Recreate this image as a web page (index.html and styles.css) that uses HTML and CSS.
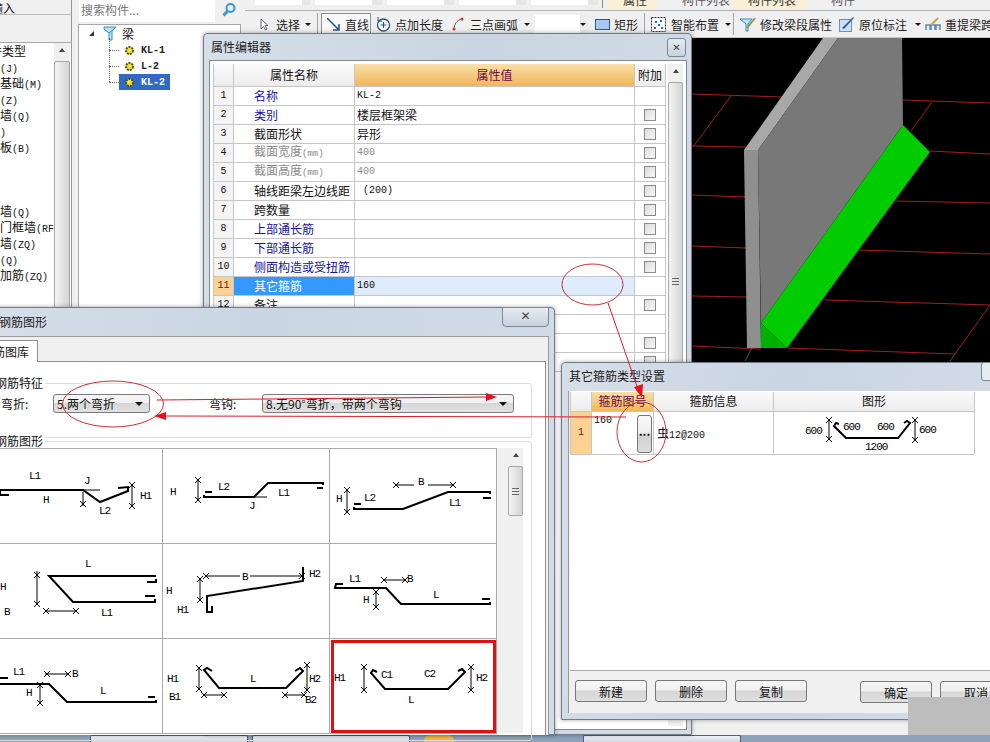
FILE: index.html
```html
<!DOCTYPE html>
<html lang="zh-CN">
<head>
    <meta charset="UTF-8">
    <meta name="viewport" content="width=device-width, initial-scale=1.0">
    <title>属性编辑器</title>
    <link rel="stylesheet" href="styles.css">
</head>
<body>
<div class="app">
    <div class="workspace">
        <!-- 左侧构件类型 -->
        <div class="side">
            <div class="side-top"><span class="side-top-text">输入</span></div>
            <div class="side-blank"></div>
            <div class="side-list">
                <ul class="type-list">
                    <li class="cut">件类型</li>
                    <li><span class="m">(J)</span></li>
                    <li>基础<span class="m">(M)</span></li>
                    <li><span class="m">(Z)</span></li>
                    <li>墙<span class="m">(Q)</span></li>
                    <li><span class="m">)</span></li>
                    <li>板<span class="m">(B)</span></li>
                    <li>&nbsp;</li>
                    <li>&nbsp;</li>
                    <li>&nbsp;</li>
                    <li>墙<span class="m">(Q)</span></li>
                    <li>门框墙<span class="m">(RF</span></li>
                    <li>墙<span class="m">(ZQ)</span></li>
                    <li><span class="m">(Q)</span></li>
                    <li>加筋<span class="m">(ZQ)</span></li>
                </ul>
                <div class="vscroll side-scroll"><span class="up"></span><span class="thumb"></span></div>
            </div>
        </div>

        <!-- 构件树 -->
        <div class="tree-panel">
            <div class="search">
                <div class="search-box">搜索构件...</div>
                <svg class="search-icon" width="16" height="16" viewBox="0 0 16 16"><circle cx="9.5" cy="6" r="4" fill="#dff1fb" stroke="#3a97d4" stroke-width="2"/><path d="M6.5 9 2.5 13.5" stroke="#3a97d4" stroke-width="3"/></svg>
            </div>
            <div class="tree">
                <div class="tree-root">
                    <span class="tree-arrow"></span>
                    <svg width="14" height="15" viewBox="0 0 14 15"><path d="M1 1h12L9 5v9H6V7L1 3z" fill="#bfe3f5" stroke="#2f8fc4"/><path d="M6 7l6-5" stroke="#2f8fc4"/></svg>
                    <span class="tree-label">梁</span>
                </div>
                <div class="tree-kids">
                    <div class="tree-item"><svg class="gear" width="11" height="11" viewBox="0 0 11 11"><circle cx="5.5" cy="5.5" r="3.5" fill="#f2e33a" stroke="#54500c" stroke-width="2" stroke-dasharray="2 1"/></svg><span class="m tree-name">KL-1</span></div>
                    <div class="tree-item"><svg class="gear" width="11" height="11" viewBox="0 0 11 11"><circle cx="5.5" cy="5.5" r="3.5" fill="#f2e33a" stroke="#54500c" stroke-width="2" stroke-dasharray="2 1"/></svg><span class="m tree-name">L-2</span></div>
                    <div class="tree-item selected"><svg class="gear" width="11" height="11" viewBox="0 0 11 11"><circle cx="5.5" cy="5.5" r="3.5" fill="#f2e33a" stroke="#54500c" stroke-width="2" stroke-dasharray="2 1"/></svg><span class="m tree-name">KL-2</span></div>
                </div>
            </div>
        </div>

        <div class="main">
            <div class="strip">
                <span class="strip-box"></span><span class="strip-box wide"></span><span class="strip-box wide"></span><span class="strip-box wide"></span><span class="strip-box wide"></span>
                <span class="strip-sep"></span>
                <span class="strip-tab">属性</span>
                <span class="strip-text">构件列表</span>
                <span class="strip-tab second">构件列表</span>
                <span class="strip-text">构件</span>
            </div>
            <div class="toolbar">
                <div class="tool first">
                    <svg width="9" height="13" viewBox="0 0 9 13"><path d="M1 1v10l2.500-2.500 2 3.500 1.500-1-2-3.500H8z" fill="#fff" stroke="#667"/></svg>
                    <span class="tool-text gap-select">选择</span><span class="caret"></span>
                </div>
                <span class="tb-sep"></span>
                <div class="tool line-tool">
                    <svg width="13" height="13" viewBox="0 0 13 13"><path d="M0 0 12 12M12 6v6H6" fill="none" stroke="#24508c" stroke-width="1.500"/></svg>
                    <span>直线</span>
                </div>
                <div class="tool add-len">
                    <svg width="15" height="15" viewBox="0 0 15 15"><circle cx="7.500" cy="8" r="6" fill="#fff" stroke="#24508c" stroke-width="1.300"/><path d="M7.500 5v6M4.500 8h6" stroke="#24508c"/><path d="M2 0v4h4" fill="none" stroke="#24508c"/></svg>
                    <span>点加长度</span>
                </div>
                <div class="tool arc-tool">
                    <svg width="12" height="14" viewBox="0 0 12 14"><path d="M2 13C2 7 5 3 10 2" fill="none" stroke="#555"/><circle cx="2" cy="12" r="1.500" fill="#c33"/><circle cx="10" cy="2" r="1.500" fill="#c33"/></svg>
                    <span class="gap-arc">三点画弧</span><span class="caret gap-arc"></span>
                </div>
                <div class="combo"><span class="caret"></span></div>
                <div class="tool rect-tool">
                    <svg width="15" height="11" viewBox="0 0 15 11"><rect x=".5" y=".5" width="14" height="10" fill="#a9c8ee" stroke="#2b55a0"/></svg>
                    <span>矩形</span>
                </div>
                <span class="tb-sep rect-sep"></span>
                <div class="tool smart-tool">
                    <svg width="15" height="15" viewBox="0 0 15 15"><rect x=".5" y=".5" width="14" height="14" fill="#fff" stroke="#333" stroke-dasharray="2 1"/><path d="M4 4h2v2H4zM9 3h2v2H9zM7 7h2v2H7zM3 10h2v2H3zM10 10h2v2h-2z" fill="#2a6fb5"/></svg>
                    <span class="gap-smart">智能布置</span><span class="caret caret-smart"></span>
                </div>
                <span class="tb-sep smart-sep"></span>
                <div class="tool edit-tool">
                    <svg width="16" height="15" viewBox="0 0 16 15"><path d="M0 2h12L8 7v7H6V7z" fill="#bfe3f5" stroke="#2f8fc4"/><path d="M7 11 15 1" stroke="#a88d3b" stroke-width="2"/></svg>
                    <span>修改梁段属性</span>
                </div>
                <div class="tool mark-tool">
                    <svg width="16" height="16" viewBox="0 0 16 16"><rect x=".5" y="3.500" width="12" height="12" fill="#cfe0f3" stroke="#6d8fb8"/><path d="M3 12 14 1l1 1L5 13z" fill="#2a5fb0"/></svg>
                    <span class="gap-mark">原位标注</span><span class="caret gap-mark"></span>
                </div>
                <div class="tool span-tool">
                    <svg width="16" height="14" viewBox="0 0 16 14"><path d="M1 13V8h4v5M6 13V8h4v5M11 13V8h4v5" fill="none" stroke="#5c86b8" stroke-width="1.500"/><path d="M6 8l7-7" stroke="#c9a24a" stroke-width="2"/></svg>
                    <span>重提梁跨</span>
                </div>
            </div>
            <svg class="canvas" width="745" height="324" viewBox="245 38 745 324">
                <rect x="245" y="38" width="745" height="324" fill="#000"/>
                <g stroke="#a01f1f" stroke-width="1" fill="none">
                    <path d="M692 94 782 97M903 100 990 103M692 146 746 147M930 151 990 154M692 195 745 197M895 201 990 203M692 246 746 248M858 250 990 254M692 296 747 297M825 300 990 305M692 346 761 349M787 348 955 354"/>
                    <path d="M731 96 693 147M932 102 911 131M990 305 955 354"/>
                </g>
                <path d="M752 348 745 361M955 354 950 361" stroke="#2c6b22" fill="none"/>
                <polygon points="823,38 838,38 758,150 744,150" fill="#a8a8a8"/>
                <polygon points="838,38 902,38 903,125 761,323 758,150" fill="#787878"/>
                <polygon points="744,150 758,150 761,348 747,348" fill="#8f8f8f"/>
                <polygon points="903,125 930,152 787,348 761,323" fill="#00cc00"/>
                <polygon points="761,323 787,348 761,348" fill="#00b000"/>
            </svg>
        </div>
    </div>

    <div class="taskbar">
        <span class="task-item first-task"></span>
        <span class="task-item"></span>
        <span class="task-icon"></span>
        <span class="task-item last-task"></span>
    </div>

    <!-- 属性编辑器 -->
    <section class="window prop-window">
        <header class="win-title">属性编辑器<span class="win-close small">✕</span></header>
        <div class="prop-frame">
            <table class="prop-table">
                <colgroup><col class="c-no"><col class="c-name"><col class="c-val"><col class="c-add"></colgroup>
                <thead>
                    <tr><th></th><th>属性名称</th><th class="hot">属性值</th><th>附加</th></tr>
                </thead>
                <tbody>
                    <tr><td class="no">1</td><td class="name blue">名称</td><td class="val m">KL-2</td><td></td></tr>
                    <tr><td class="no">2</td><td class="name blue">类别</td><td class="val">楼层框架梁</td><td class="add"><span class="cb"></span></td></tr>
                    <tr><td class="no">3</td><td class="name">截面形状</td><td class="val">异形</td><td class="add"><span class="cb"></span></td></tr>
                    <tr class="gray"><td class="no">4</td><td class="name">截面宽度<span class="m small-m">(mm)</span></td><td class="val m">400</td><td class="add"><span class="cb"></span></td></tr>
                    <tr class="gray"><td class="no">5</td><td class="name">截面高度<span class="m small-m">(mm)</span></td><td class="val m">400</td><td class="add"><span class="cb"></span></td></tr>
                    <tr><td class="no">6</td><td class="name">轴线距梁左边线距</td><td class="val m">&nbsp;(200)</td><td class="add"><span class="cb"></span></td></tr>
                    <tr><td class="no">7</td><td class="name">跨数量</td><td class="val"></td><td class="add"><span class="cb"></span></td></tr>
                    <tr><td class="no">8</td><td class="name blue">上部通长筋</td><td class="val"></td><td class="add"><span class="cb"></span></td></tr>
                    <tr><td class="no">9</td><td class="name blue">下部通长筋</td><td class="val"></td><td class="add"><span class="cb"></span></td></tr>
                    <tr><td class="no">10</td><td class="name blue">侧面构造或受扭筋</td><td class="val"></td><td class="add"><span class="cb"></span></td></tr>
                    <tr class="current"><td class="no">11</td><td class="name">其它箍筋</td><td class="val m">160</td><td></td></tr>
                    <tr><td class="no">12</td><td class="name">备注</td><td class="val"></td><td class="add"><span class="cb"></span></td></tr>
                    <tr><td class="no">13</td><td class="name"></td><td class="val"></td><td></td></tr>
                    <tr><td class="no">14</td><td class="name"></td><td class="val"></td><td class="add"><span class="cb"></span></td></tr>
                    <tr><td class="no">15</td><td class="name"></td><td class="val"></td><td class="add"><span class="cb"></span></td></tr>
                </tbody>
            </table>
            <div class="vscroll prop-scroll"><span class="up"></span><span class="thumb"><i></i></span></div>
        </div>
    </section>

    <!-- 钢筋图形 -->
    <section class="window rebar-window">
        <header class="win-title rebar-title">钢筋图形<span class="win-close wide-close">✕</span></header>
        <div class="rebar-body">
            <div class="tab">箍筋图库</div>
            <div class="tab-pane">
                <div class="group first-group">
                    <div class="group-title">钢筋特征</div>
                    <div class="filters">
                        <span class="f-label">弯折:</span>
                        <div class="select s-bend">5.两个弯折<span class="caret"></span></div>
                        <span class="f-label hook">弯钩:</span>
                        <div class="select s-hook">8.无90°弯折，带两个弯钩<span class="caret"></span></div>
                    </div>
                </div>
                <div class="group">
                    <div class="group-title">钢筋图形</div>
                    <div class="gallery">
                        <div class="shapes">
                            <div class="shape">
                                <svg width="167" height="94" viewBox="-4 448 167 94">
                                    <defs><path id="tick" d="M-3 -3 3 3M3 -3 -3 3" fill="none" stroke="#000" stroke-width="1"/></defs>
                                    <path class="bar" d="M9 494H0V489H83L100 501 128 490V486L118 487"/>
                                    <path class="dim" d="M83 491V505M132 484V505M83 489H100"/>
                                    <use href="#tick" x="83" y="503"/><use href="#tick" x="132" y="484"/><use href="#tick" x="132" y="505"/>
                                    <text x="29" y="478">L1</text><text x="84" y="483">J</text><text x="43" y="502">H</text><text x="99" y="513">L2</text><text x="140" y="498">H1</text>
                                </svg>
                            </div>
                            <div class="shape">
                                <svg width="167" height="94" viewBox="163 448 167 94">
                                    <path class="bar" d="M212 491H205M204 494V496H254L268 482H323V484M323 487H317"/>
                                    <path class="dim" d="M198 478V500M254 496H267"/>
                                    <use href="#tick" x="198" y="479"/><use href="#tick" x="198" y="499"/>
                                    <text x="170" y="494">H</text><text x="218" y="489">L2</text><text x="278" y="495">L1</text><text x="249" y="508">J</text>
                                </svg>
                            </div>
                            <div class="shape">
                                <svg width="166" height="94" viewBox="330 448 166 94">
                                    <path class="bar" d="M361 503H354M354 506V508H403L448 491H490V493M491 497H483"/>
                                    <path class="dim" d="M347 488V512M396 484H414M428 484H453"/>
                                    <use href="#tick" x="347" y="489"/><use href="#tick" x="347" y="511"/><use href="#tick" x="396" y="484"/><use href="#tick" x="453" y="484"/>
                                    <text x="336" y="501">H</text><text x="364" y="500">L2</text><text x="418" y="484">B</text><text x="449" y="505">L1</text>
                                </svg>
                            </div>
                            <div class="shape">
                                <svg width="167" height="94" viewBox="-4 543 167 94">
                                    <path class="bar" d="M147 581H156V578M156 575H49L73 601H155V598M155 595H145"/>
                                    <path class="dim" d="M37 570V603M45 610H77"/>
                                    <use href="#tick" x="37" y="574"/><use href="#tick" x="37" y="603"/><use href="#tick" x="46" y="610"/><use href="#tick" x="76" y="610"/>
                                    <text x="85" y="566">L</text><text x="101" y="615">L1</text><text x="0" y="589">H</text><text x="4" y="614">B</text>
                                </svg>
                            </div>
                            <div class="shape">
                                <svg width="167" height="94" viewBox="163 543 167 94">
                                    <path class="bar" d="M212 605V611H207V595L303 580V566"/>
                                    <path class="dim" d="M206 575H240M250 575H302M200 577V600"/>
                                    <use href="#tick" x="206" y="575"/><use href="#tick" x="302" y="575"/><use href="#tick" x="200" y="578"/><use href="#tick" x="200" y="599"/>
                                    <text x="166" y="593">H</text><text x="177" y="612">H1</text><text x="242" y="579">B</text><text x="309" y="576">H2</text>
                                </svg>
                            </div>
                            <div class="shape">
                                <svg width="166" height="94" viewBox="330 543 166 94">
                                    <path class="bar" d="M343 583H336L335 587H386L401 603H490V601M490 598H482"/>
                                    <path class="dim" d="M384 579H405M376 590V606"/>
                                    <use href="#tick" x="384" y="579"/><use href="#tick" x="405" y="579"/><use href="#tick" x="376" y="591"/><use href="#tick" x="376" y="606"/>
                                    <text x="349" y="581">L1</text><text x="407" y="581">B</text><text x="363" y="602">H</text><text x="433" y="597">L</text>
                                </svg>
                            </div>
                            <div class="shape">
                                <svg width="167" height="94" viewBox="-4 638 167 94">
                                    <path class="bar" d="M8 677H0M0 683H49L67 701H156V699M155 696H148"/>
                                    <path class="dim" d="M45 673H68M40 684V702"/>
                                    <use href="#tick" x="47" y="673"/><use href="#tick" x="68" y="673"/><use href="#tick" x="40" y="684"/><use href="#tick" x="40" y="702"/>
                                    <text x="13" y="674">L1</text><text x="72" y="676">B</text><text x="26" y="695">H</text><text x="100" y="693">L</text>
                                </svg>
                            </div>
                            <div class="shape">
                                <svg width="167" height="94" viewBox="163 638 167 94">
                                    <path class="bar" d="M212 670 207 667 204 669 219 687H286L303 670 300 667 295 670"/>
                                    <path class="dim" d="M199 666V688M203 694H224M285 694H304M307 663V690"/>
                                    <use href="#tick" x="199" y="667"/><use href="#tick" x="199" y="688"/><use href="#tick" x="204" y="694"/><use href="#tick" x="224" y="694"/><use href="#tick" x="285" y="694"/><use href="#tick" x="304" y="694"/><use href="#tick" x="307" y="664"/><use href="#tick" x="307" y="689"/>
                                    <text x="167" y="681">H1</text><text x="169" y="699">B1</text><text x="250" y="681">L</text><text x="309" y="681">H2</text><text x="305" y="702">B2</text>
                                </svg>
                            </div>
                            <div class="shape chosen">
                                <svg width="166" height="94" viewBox="330 638 166 94">
                                    <path class="bar" d="M377 671 373 669 371 672 385 688H448L465 671 462 668 458 670"/>
                                    <path class="dim" d="M364 665V690M471 665V690"/>
                                    <use href="#tick" x="364" y="666"/><use href="#tick" x="364" y="689"/><use href="#tick" x="471" y="666"/><use href="#tick" x="471" y="689"/>
                                    <text x="334" y="680">H1</text><text x="381" y="677">C1</text><text x="424" y="676">C2</text><text x="476" y="680">H2</text><text x="408" y="702">L</text>
                                </svg>
                            </div>
                        </div>
                        <div class="gallery-gap"></div>
                        <div class="vscroll gallery-scroll"><span class="up"></span><span class="thumb"><i></i></span></div>
                    </div>
                </div>
            </div>
        </div>
    </section>

    <!-- 其它箍筋类型设置 -->
    <section class="window other-window">
        <header class="win-title other-title">其它箍筋类型设置<span class="win-close other-close"></span></header>
        <div class="other-body">
            <div class="other-frame">
                <table class="other-table">
                    <colgroup><col class="o-no"><col class="o-fig"><col class="o-info"><col class="o-shape"></colgroup>
                    <thead><tr><th></th><th class="hot">箍筋图号</th><th>箍筋信息</th><th>图形</th></tr></thead>
                    <tbody>
                        <tr>
                            <td class="o-head">1</td>
                            <td class="o-figno"><div class="fig-cell"><span class="m fig-num">160</span><span class="more">...</span></div></td>
                            <td class="o-text">虫<span class="m">12@200</span></td>
                            <td class="o-draw">
                                <svg width="201" height="42" viewBox="773 411 201 42">
                                    <path class="bar" d="M838 423 835 422 833 425 845 437H897L909 422 906 420 903 422"/>
                                    <path class="dim" d="M828 418V439M914 418V440"/>
                                    <use href="#tick" x="828" y="419"/><use href="#tick" x="828" y="438"/><use href="#tick" x="914" y="419"/><use href="#tick" x="914" y="439"/>
                                    <text x="804" y="433">600</text><text x="842" y="429">600</text><text x="876" y="429">600</text><text x="918" y="432">600</text><text x="864" y="449">1200</text>
                                </svg>
                            </td>
                        </tr>
                    </tbody>
                </table>
            </div>
            <div class="btn-row">
                <button class="btn">新建</button>
                <button class="btn">删除</button>
                <button class="btn">复制</button>
                <button class="btn ok">确定</button>
                <button class="btn ok">取消</button>
            </div>
        </div>
    </section>

    <div class="patch"></div>

    <!-- 红色批注 -->
    <svg class="notes" width="990" height="742" viewBox="0 0 990 742">
        <g fill="none" stroke="#c8323a">
            <ellipse cx="592.500" cy="284.500" rx="30.500" ry="20.500"/>
            <ellipse cx="113" cy="404" rx="50.500" ry="23"/>
            <ellipse cx="641.500" cy="432" rx="24.500" ry="30"/>
        </g>
        <g fill="none" stroke="#d81e28">
            <path d="M608 303 639 392"/>
            <path d="M157 400 488 397"/>
            <path d="M626 417 164 416"/>
        </g>
        <g fill="#e8101c">
            <polygon points="642,398 634,387 643,384"/>
            <polygon points="497,397 486,393 486,401"/>
            <polygon points="154,416 166,412 166,420"/>
        </g>
    </svg>
</div>
</body>
</html>
```

FILE: styles.css
```css
* {
    box-sizing: border-box;
}

html, body {
    margin: 0;
    height: 100%;
}

body {
    font-family: "Noto Sans CJK SC", sans-serif;
    font-size: 12px;
    color: #111;
    overflow: hidden;
}

.m {
    font-family: "Liberation Mono", monospace;
    font-size: 10px;
}

.app {
    position: relative;
    width: 990px;
    height: 742px;
    overflow: hidden;
    background: #f0f0f0;
    display: flex;
    flex-direction: column;
}

.workspace {
    flex: 1;
    display: flex;
    min-height: 0;
}

/* left list */
.side {
    width: 72px;
    display: flex;
    flex-direction: column;
    border-right: 1px solid #9a9a9a;
}

.side-top {
    height: 15px;
    border-bottom: 1px solid #bbb;
    overflow: hidden;
}

.side-top-text {
    display: block;
    margin-left: -9px;
    line-height: 15px;
}

.side-blank {
    height: 28px;
    border-bottom: 1px solid #a8a8a8;
}

.side-list {
    flex: 1;
    display: flex;
    background: #fff;
    overflow: hidden;
}

.type-list {
    width: 54px;
    margin: 0;
    padding: 0;
    list-style: none;
    white-space: nowrap;
    overflow: hidden;
}

.type-list li {
    height: 16px;
    line-height: 16px;
}

.type-list .cut {
    margin-left: -10px;
}

.vscroll {
    background: #f0f0f0;
    display: flex;
    flex-direction: column;
    align-items: center;
}

.vscroll .up {
    width: 0;
    height: 0;
    margin-top: 5px;
    border-left: 3px solid transparent;
    border-right: 3px solid transparent;
    border-bottom: 4px solid #444;
}

.vscroll .thumb {
    width: 100%;
    border: 1px solid #a9a9a9;
    border-radius: 2px;
    background: linear-gradient(to right, #f4f4f4, #d4d4d4);
    display: flex;
    align-items: center;
    justify-content: center;
}

.vscroll .thumb i {
    width: 7px;
    height: 7px;
    border-top: 1px solid #666;
    border-bottom: 1px solid #666;
    background: linear-gradient(#666, #666) center / 100% 1px no-repeat;
}

.side-scroll {
    width: 16px;
}

.side-scroll .thumb {
    height: 260px;
    margin-top: 9px;
}

/* tree */
.tree-panel {
    width: 173px;
    display: flex;
    flex-direction: column;
}

.search {
    height: 24px;
    display: flex;
    align-items: flex-start;
}

.search-box {
    width: 136px;
    height: 22px;
    margin-left: 7px;
    padding-left: 2px;
    background: #fff;
    color: #777;
    line-height: 20px;
}

.search-icon {
    margin: 2px 0 0 6px;
}

.tree {
    width: 163px;
    flex: 1;
    margin-left: 6px;
    padding: 0 0 0 10px;
    background: #fff;
    border: 1px solid #a8a8a8;
}

.tree-root {
    height: 17px;
    display: flex;
    align-items: center;
}

.tree-arrow {
    width: 0;
    height: 0;
    margin-right: 9px;
    border-bottom: 5px solid #333;
    border-left: 5px solid transparent;
}

.tree-label {
    margin-left: 5px;
}

.tree-kids {
    position: relative;
    margin-left: 20px;
    padding-left: 10px;
}

.tree-kids::before {
    content: "";
    position: absolute;
    left: 0;
    top: -4px;
    bottom: 8px;
    border-left: 1px dotted #666;
}

.tree-item {
    position: relative;
    width: 51px;
    height: 16px;
    padding-left: 5px;
    display: flex;
    align-items: center;
    gap: 6px;
}

.tree-item::before {
    content: "";
    position: absolute;
    left: -10px;
    top: 8px;
    width: 10px;
    border-top: 1px dotted #666;
}

.tree-name {
    font-size: 10px;
    font-weight: bold;
    color: #222;
}

.tree-item.selected {
    background: #316ac5;
}

.tree-item.selected .tree-name {
    color: #fff;
}

/* toolbar + canvas */
.main {
    flex: 1;
    min-width: 0;
}

.strip {
    height: 11px;
    display: flex;
    border-bottom: 1px solid #aeb4ba;
    overflow: hidden;
    padding-left: 10px;
    white-space: nowrap;
}

.strip-box {
    width: 55px;
    height: 5px;
    margin-right: 5px;
    background: linear-gradient(to right, #fff 85%, #e6e6e6 85%);
}

.strip-box.wide {
    width: 67px;
}

.strip-sep {
    width: 1px;
    height: 8px;
    margin: 0 4px 0 -1px;
    background: #888;
}

.strip-tab {
    width: 50px;
    height: 9px;
    line-height: 0;
    background: #fbefd5;
    color: #333;
    padding-left: 16px;
}

.strip-tab.second {
    width: 74px;
}

.strip-text {
    width: 75px;
    line-height: 0;
    color: #555;
    padding-left: 25px;
    overflow: hidden;
}

.toolbar {
    height: 27px;
    display: flex;
    align-items: center;
    padding-left: 15px;
    white-space: nowrap;
    overflow: hidden;
    border-bottom: 1px solid #c8c8c8;
}

.tool {
    display: flex;
    align-items: center;
    gap: 4px;
    height: 22px;
    flex-shrink: 0;
    color: #222;
}

.first {
    gap: 0;
}

.gap-select {
    margin: 0 5px 0 7px;
}

.caret {
    display: inline-block;
    width: 0;
    height: 0;
    border-left: 3px solid transparent;
    border-right: 3px solid transparent;
    border-top: 3px solid #111;
}

.tb-sep {
    width: 1px;
    height: 22px;
    margin-left: 6px;
    background: #a4a4a4;
    flex-shrink: 0;
}

.line-tool {
    margin-left: 3px;
    width: 50px;
    padding-left: 5px;
    gap: 5px;
    border: 1px solid #8f8f8f;
    background: #f8f8f8;
}

.add-len {
    margin-left: 5px;
}

.arc-tool {
    margin-left: 9px;
    gap: 0;
}

.gap-arc {
    margin-left: 6px;
}

.combo {
    width: 53px;
    height: 18px;
    margin-left: 5px;
    padding-right: 2px;
    background: linear-gradient(to right, #fff 85%, #ececec 85%);
    display: flex;
    align-items: center;
    justify-content: flex-end;
    flex-shrink: 0;
}

.rect-tool {
    margin-left: 7px;
}

.smart-tool {
    margin-left: 6px;
    gap: 0;
}

.gap-smart {
    margin-left: 5px;
}

.caret-smart {
    margin-left: 6px;
}

.smart-sep {
    margin-left: 2px;
}

.edit-tool {
    margin-left: 6px;
}

.mark-tool {
    margin-left: 7px;
    gap: 0;
}

.gap-mark {
    margin-left: 4px;
}

.mark-tool .caret {
    margin-left: 8px;
}

.span-tool {
    margin-left: 4px;
}

.canvas {
    display: block;
}

/* taskbar */
.taskbar {
    height: 7px;
    background: #8ea3ba;
    display: flex;
    gap: 4px;
    padding-left: 90px;
    flex-shrink: 0;
}

.task-item {
    width: 158px;
    background: linear-gradient(#f1f4f7, #cfd9e3);
    border: 1px solid #55606c;
    border-bottom: 0;
    border-radius: 2px 2px 0 0;
}

.task-icon {
    width: 30px;
    height: 7px;
    margin-left: 10px;
    background: #f2b93b;
    border-radius: 6px 6px 0 0;
}

.last-task {
    margin-left: 125px;
}

/* windows */
.window {
    position: absolute;
    background: linear-gradient(100deg, #d6dfe9, #c9d5e2 45%, #d3dde8);
    border: 1px solid #6f7b87;
    border-radius: 4px 4px 0 0;
    box-shadow: 0 0 4px rgba(0, 0, 0, .35);
}

.win-title {
    position: relative;
    height: 26px;
    padding-left: 7px;
    line-height: 26px;
    color: #1a1a1a;
}

.win-close {
    position: absolute;
    top: 4px;
    right: 5px;
    width: 19px;
    height: 19px;
    border: 1px solid #7b8794;
    border-radius: 3px;
    background: linear-gradient(#e6ebf0, #c8d2dc);
    text-align: center;
    line-height: 17px;
    font-family: "DejaVu Sans", sans-serif;
    color: #444;
}

.win-close.small {
    font-size: 10px;
}

.prop-window {
    left: 203px;
    top: 33px;
    width: 489px;
    height: 702px;
}

.prop-frame {
    display: flex;
    margin: 0 4px 0 5px;
    padding: 3px;
    height: 670px;
    background: #fff;
    border: 1px solid #8a8a8a;
}

.prop-table,
.other-table {
    border-collapse: collapse;
    table-layout: fixed;
}

.prop-table {
    width: 452px;
    align-self: flex-start;
}

.c-no { width: 20px; }
.c-name { width: 121px; }
.c-val { width: 280px; }
.c-add { width: 31px; }

.prop-table th,
.other-table th {
    height: 22px;
    font-weight: normal;
    background: linear-gradient(#fafafa, #ececec);
    border: 1px solid #c6c6c6;
    border-top: 0;
    padding: 0;
}

th.hot {
    background: linear-gradient(#f9dfa8, #efb75a);
    color: #6d0a3c;
}

.prop-table td {
    height: 19px;
    padding: 0;
    border: 1px solid #c6c6c6;
    line-height: 12px;
    white-space: nowrap;
    overflow: hidden;
}

td.no {
    background: #f4f4f4;
    text-align: center;
    font-family: "Liberation Mono", monospace;
    font-size: 10px;
}

td.name {
    padding-left: 20px;
}

td.val {
    padding-left: 2px;
}

td.add {
    text-align: center;
}

.val.m {
    font-size: 10px;
}

.blue {
    color: #14149a;
}

.gray td {
    color: #8a8a8a;
}

.gray td.no {
    color: #111;
}

.small-m {
    font-size: 9px;
}

.cb {
    display: block;
    width: 12px;
    height: 12px;
    margin: 0 auto;
    border: 1px solid #8a8a8a;
    background: linear-gradient(135deg, #dcdcdc, #f8f8f8);
}

.current td.no {
    background: #fbd294;
    color: #7a1010;
}

.current td.name {
    background: #3399ff;
    color: #fff;
}

.current td.val {
    background: #deecfc;
}

.prop-scroll {
    width: 16px;
    margin-left: 2px;
}

.prop-scroll .thumb {
    height: 398px;
    margin-top: 9px;
}

/* rebar dialog */
.rebar-window {
    left: -40px;
    top: 307px;
    width: 595px;
    height: 428px;
}

.rebar-title {
    height: 28px;
    padding-left: 0;
    margin-left: 38px;
    line-height: 28px;
}

.wide-close {
    top: -1px;
    right: 5px;
    width: 47px;
    height: 20px;
    border-radius: 0 0 4px 4px;
    font-size: 12px;
}

.rebar-body {
    height: 399px;
    margin: 0 5px;
    padding: 3px 2px 0 9px;
    background: #f0f0f0;
    border: 1px solid #9a9a9a;
    border-bottom: 0;
}

.tab {
    width: 62px;
    height: 22px;
    padding-left: 4px;
    line-height: 21px;
    background: #fff;
    border: 1px solid #8e8f8f;
    border-bottom: 0;
    position: relative;
    z-index: 1;
    margin-bottom: -1px;
}

.tab-pane {
    height: 374px;
    padding: 21px 13px 0 3px;
    background: #fff;
    border: 1px solid #8e8f8f;
    border-bottom: 0;
}

.group {
    height: 300px;
    border: 1px solid #dcdcdc;
    border-radius: 3px;
    padding: 0 0 0 15px;
}

.first-group {
    height: 55px;
    margin-bottom: 3px;
    padding-left: 20px;
}

.group-title {
    width: fit-content;
    margin-left: -1px;
    margin-top: -8px;
    padding-right: 2px;
    height: 14px;
    line-height: 14px;
    background: #fff;
}

.first-group .group-title {
    margin-left: -6px;
}

.filters {
    display: flex;
    align-items: center;
    margin-top: 4px;
    height: 19px;
}

.f-label {
    width: 52px;
}

.hook {
    margin-left: 59px;
    width: 53px;
}

.select {
    height: 19px;
    padding-left: 3px;
    line-height: 18px;
    border: 1px solid #7b7b7b;
    border-radius: 3px;
    background: linear-gradient(#f6f6f6, #f0f0f0 45%, #d6d6d6 50%, #e2e2e2);
    position: relative;
}

.select .caret {
    position: absolute;
    right: 6px;
    top: 7px;
    border-left-width: 4px;
    border-right-width: 4px;
    border-top-width: 4px;
}

.s-bend {
    width: 97px;
}

.s-hook {
    width: 252px;
}

.gallery {
    display: flex;
}

.shapes {
    width: 501px;
    display: grid;
    grid-template-columns: 167px 167px 167px;
    grid-template-rows: 95px 95px 95px;
    border-top: 1px solid #aaa;
}

.shape {
    border-right: 1px solid #aaa;
    border-bottom: 1px solid #aaa;
    overflow: hidden;
}

.shape svg {
    display: block;
}

.chosen {
    outline: 3px solid #e01010;
    outline-offset: -4px;
}

.bar {
    fill: none;
    stroke: #000;
    stroke-width: 2;
}

.dim {
    fill: none;
    stroke: #000;
    stroke-width: 1;
}

.shape text,
.o-draw text {
    font-family: "Liberation Mono", monospace;
    font-size: 11px;
    letter-spacing: -1px;
    fill: #000;
}

.gallery-gap {
    width: 11px;
    height: 285px;
    background: #f0f0f0;
}

.gallery-scroll {
    width: 15px;
    height: 285px;
}

.gallery-scroll .thumb {
    height: 50px;
    margin-top: 9px;
}

/* other stirrup dialog */
.other-window {
    left: 561px;
    top: 362px;
    width: 440px;
    height: 358px;
}

.other-title {
    height: 28px;
    line-height: 26px;
}

.other-close {
    top: -1px;
    right: 0;
    background: #e8edf2;
}

.other-body {
    height: 322px;
    margin: 0 0 0 6px;
    background: #f0f0f0;
    border-left: 1px solid #9a9a9a;
    padding-left: 1px;
}

.other-frame {
    height: 280px;
    background: #fff;
    border-bottom: 1px solid #aaa;
    padding-top: 1px;
}

.other-table {
    width: 404px;
}

.o-no { width: 21px; }
.o-fig { width: 62px; }
.o-info { width: 120px; }
.o-shape { width: 201px; }

.other-table th {
    height: 19px;
    line-height: 18px;
}

.other-table td {
    height: 42px;
    padding: 0;
    border: 1px solid #c6c6c6;
}

.o-head {
    background: #fbd294;
    color: #7a1010;
    text-align: center;
    font-family: "Liberation Mono", monospace;
    font-size: 10px;
}

.fig-cell {
    display: flex;
    justify-content: space-between;
    height: 40px;
    padding: 2px 1px 0 2px;
}

.fig-num {
    line-height: 12px;
}

.more {
    width: 15px;
    height: 38px;
    border: 1px solid #777;
    border-radius: 3px;
    background: linear-gradient(#f7f7f7, #f0f0f0 45%, #d2d2d2 55%, #dcdcdc);
    text-align: center;
    line-height: 30px;
    font-weight: bold;
}

.other-table .o-text {
    padding-left: 3px;
}

.o-draw svg {
    display: block;
}

.btn-row {
    display: flex;
    gap: 8px;
    padding: 9px 0 0 5px;
}

.btn {
    width: 72px;
    height: 22px;
    padding: 0;
    border: 1px solid #777;
    border-radius: 3px;
    background: linear-gradient(#f6f6f6, #f0f0f0 45%, #d6d6d6 50%, #dfdfdf);
    font: inherit;
    color: #111;
    flex-shrink: 0;
}

.btn.ok {
    margin-top: 1px;
}

.btn:nth-child(4) {
    margin-left: 45px;
}

.patch {
    position: absolute;
    left: 908px;
    top: 697px;
    width: 82px;
    height: 38px;
    background: #bdbdbd;
}

.notes {
    position: absolute;
    left: 0;
    top: 0;
}
```
